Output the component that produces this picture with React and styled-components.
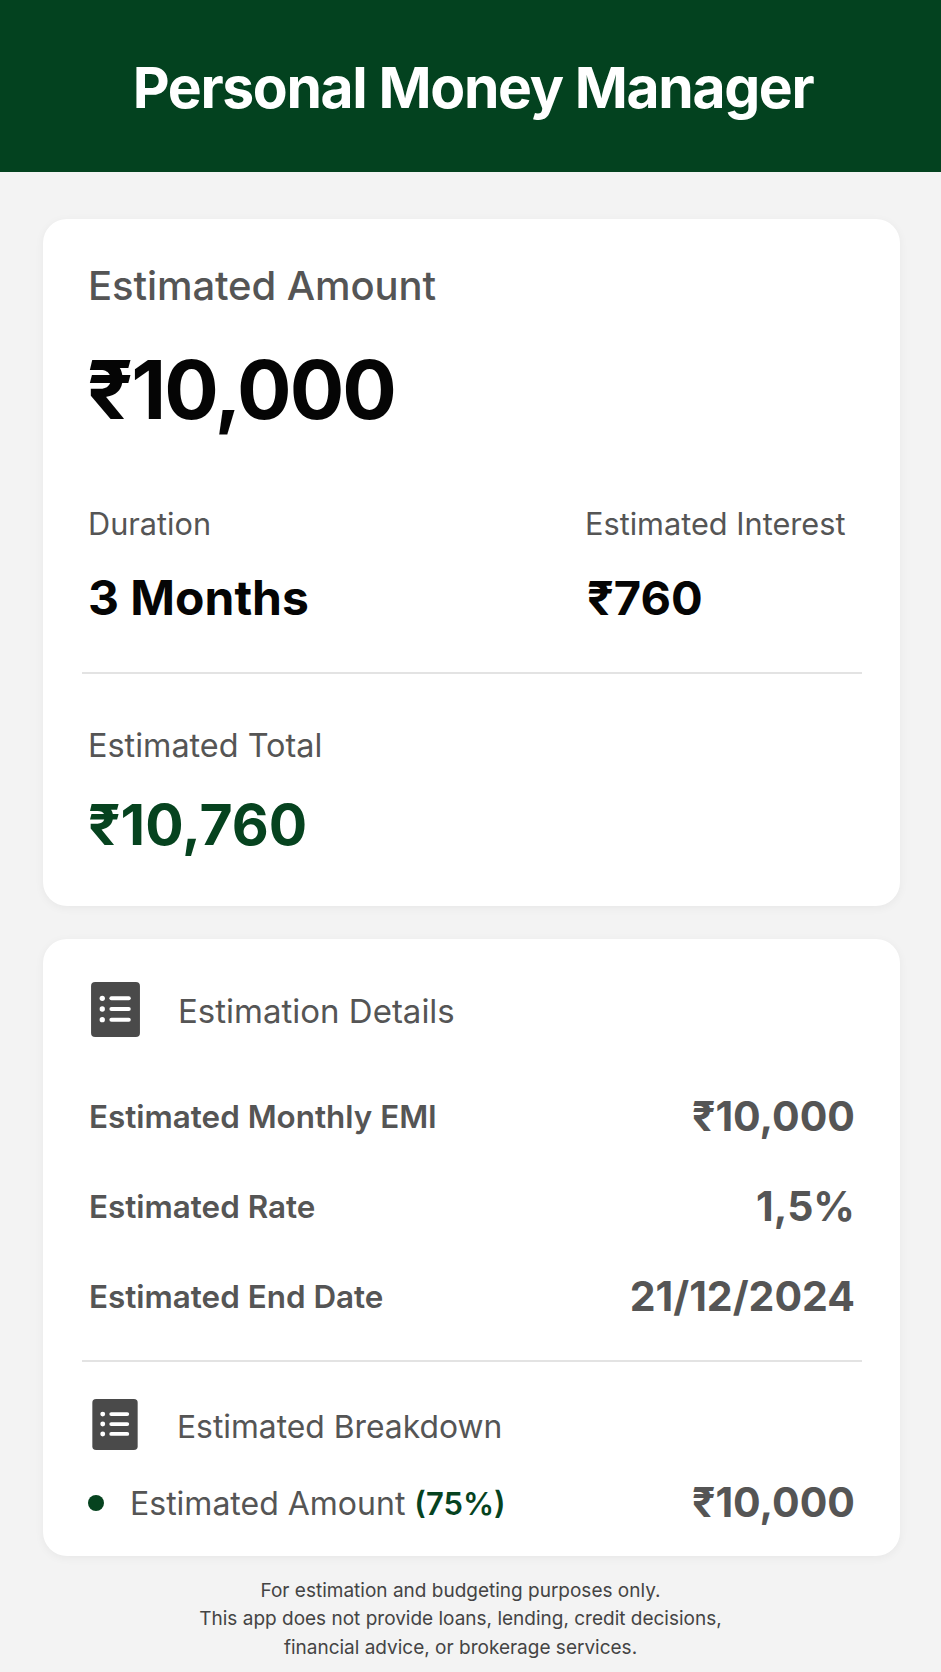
import React from 'react'
import styled, { createGlobalStyle } from 'styled-components'

const GlobalStyle = createGlobalStyle`
html, body {
    margin: 0;
    padding: 0;
    background: #f3f3f3;
    font-family: Inter, "Noto Sans", sans-serif;
}
`

function ListIcon({ width, height }) {
    return (
        <svg width={width} height={height} viewBox="0 0 48 54">
            <rect width="48" height="54" rx="4" fill="#4a4a4a" />
            <circle cx="11" cy="16" r="2.6" fill="#fff" />
            <circle cx="11" cy="26.5" r="2.6" fill="#fff" />
            <circle cx="11" cy="37" r="2.6" fill="#fff" />
            <rect x="18" y="14" width="21" height="4" rx="2" fill="#fff" />
            <rect x="18" y="24.5" width="21" height="4" rx="2" fill="#fff" />
            <rect x="18" y="35" width="21" height="4" rx="2" fill="#fff" />
        </svg>
    )
}

function App() {
    return (
        <Page>
            <GlobalStyle />
            <Header>
                <h1>Personal Money Manager</h1>
            </Header>
            <Main>
                <Card>
                    <AmountLabel>Estimated Amount</AmountLabel>
                    <BigAmount>₹10,000</BigAmount>
                    <Stats>
                        <div>
                            <StatLabel>Duration</StatLabel>
                            <StatValue>3 Months</StatValue>
                        </div>
                        <InterestCol>
                            <StatLabel>Estimated Interest</StatLabel>
                            <InterestValue>₹760</InterestValue>
                        </InterestCol>
                    </Stats>
                    <Divider />
                    <TotalBlock>
                        <TotalLabel>Estimated Total</TotalLabel>
                        <TotalValue>₹10,760</TotalValue>
                    </TotalBlock>
                </Card>
                <DetailsCard>
                    <SectionHead>
                        <ListIcon width={49} height={55} />
                        <SectionTitle>Estimation Details</SectionTitle>
                    </SectionHead>
                    <Rows>
                        <Row>
                            <RowLabel>Estimated Monthly EMI</RowLabel>
                            <RowValue>₹10,000</RowValue>
                        </Row>
                        <Row>
                            <RowLabel>Estimated Rate</RowLabel>
                            <RowValue>1,5%</RowValue>
                        </Row>
                        <Row>
                            <RowLabel>Estimated End Date</RowLabel>
                            <RowValue>21/12/2024</RowValue>
                        </Row>
                    </Rows>
                    <DetailsDivider />
                    <BreakdownHead>
                        <ListIcon width={48} height={51} />
                        <BreakdownTitle>Estimated Breakdown</BreakdownTitle>
                    </BreakdownHead>
                    <BreakdownRow>
                        <Dot />
                        <BreakdownLabel>Estimated Amount <strong>(75%)</strong></BreakdownLabel>
                        <RowValue>₹10,000</RowValue>
                    </BreakdownRow>
                </DetailsCard>
                <Footer>
                    For estimation and budgeting purposes only.<br />
                    This app does not provide loans, lending, credit decisions,<br />
                    financial advice, or brokerage services.
                </Footer>
            </Main>
        </Page>
    )
}

const Page = styled.div`
width: 941px;
height: 1672px;
overflow: hidden;
background: #f3f3f3;
`

const Header = styled.header`
height: 172px;
padding: 4px 0 0 5px;
box-sizing: border-box;
background: #03421f;
display: flex;
align-items: center;
justify-content: center;
h1 {
    margin: 0;
    color: #fff;
    font-size: 57px;
    font-weight: 650;
    letter-spacing: -1.35px;
    line-height: 68px;
}
`

const Main = styled.main`
padding: 47px 41px 0 43px;
display: flex;
flex-direction: column;
`

const Card = styled.section`
background: #fff;
border-radius: 24px;
box-shadow: 0 2px 10px rgba(0, 0, 0, 0.05);
height: 687px;
box-sizing: border-box;
padding: 44px 38px 0 39px;
`

const AmountLabel = styled.div`
margin-left: 6px;
color: #555;
font-size: 40px;
font-weight: 500;
letter-spacing: -0.1px;
line-height: 46px;
`

const BigAmount = styled.div`
margin: 33px 0 0 5px;
color: #050505;
font-size: 81px;
font-weight: 700;
letter-spacing: -2px;
line-height: 96px;
`

const Stats = styled.div`
margin: 67px 0 0 6px;
display: flex;
`

const InterestCol = styled.div`
margin-left: auto;
width: 277px;
`

const StatLabel = styled.div`
color: #555;
font-size: 30.7px;
line-height: 38px;
`

const StatValue = styled.div`
margin-top: 27px;
color: #050505;
font-size: 48px;
font-weight: 700;
line-height: 56px;
`

const InterestValue = styled(StatValue)`
margin-left: 2px;
font-size: 47px;
`

const Divider = styled.hr`
margin: 46px 0 0;
border: 0;
height: 2px;
background: #e3e3e3;
`

const TotalBlock = styled.div`
margin: 53px 0 0 6px;
`

const TotalLabel = styled(StatLabel)`
font-size: 32.4px;
`

const TotalValue = styled.div`
margin-top: 25px;
color: #06431f;
font-size: 57px;
font-weight: 700;
line-height: 70px;
`

const DetailsCard = styled(Card)`
margin-top: 33px;
height: 617px;
padding-top: 43px;
`

const SectionHead = styled.div`
margin-left: 9px;
display: flex;
align-items: center;
gap: 38px;
`

const BreakdownHead = styled(SectionHead)`
margin-top: 37px;
`

const SectionTitle = styled.div`
padding-top: 3px;
color: #555;
font-size: 33px;
line-height: 40px;
`

const BreakdownTitle = styled(SectionTitle)`
padding-top: 5px;
font-size: 31.8px;
`

const Rows = styled.div`
margin-top: 55px;
margin-left: 7px;
margin-right: 7px;
display: flex;
flex-direction: column;
gap: 40px;
`

const Row = styled.div`
height: 50px;
display: flex;
align-items: center;
justify-content: space-between;
`

const RowLabel = styled.div`
color: #555;
font-size: 31.4px;
font-weight: 600;
`

const RowValue = styled.div`
padding-bottom: 3px;
color: #555;
font-size: 41px;
font-weight: 650;
`

const DetailsDivider = styled(Divider)`
margin-top: 38px;
`

const BreakdownRow = styled(Row)`
margin: 28px 7px 0 6px;
`

const Dot = styled.span`
width: 16px;
height: 16px;
border-radius: 50%;
background: #06431f;
margin-right: 26px;
`

const BreakdownLabel = styled.div`
flex: 1;
color: #555;
font-size: 32px;
strong {
    color: #06431f;
    font-size: 31px;
    font-weight: 600;
}
`

const Footer = styled.footer`
margin-top: 21px;
padding-right: 22px;
text-align: center;
color: #444;
font-size: 19px;
line-height: 28.4px;
`

export default App
